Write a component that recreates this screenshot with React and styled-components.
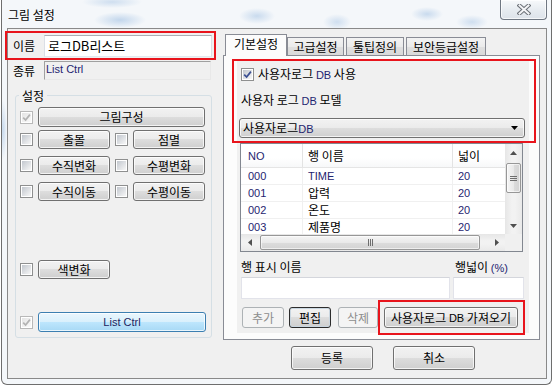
import React from "react";
import styled, { createGlobalStyle, css } from "styled-components";

const KR = `"Noto Sans CJK KR", "Liberation Sans", sans-serif`;
const LATIN = `"Liberation Sans", "DejaVu Sans", sans-serif`;
const RED = "#e8141c";

const GlobalStyle = createGlobalStyle`
  html, body { margin: 0; padding: 0; background: #fff; }
  body { font-family: ${KR}; font-size: 12px; color: #000; }
  *, *::before, *::after { box-sizing: border-box; }
`;

// window frame (Win7 glass)
const Frame = styled.div`
  width: 551px;
  height: 385px;
  margin-left: 1px;
  display: flex;
  flex-direction: column;
  border: 1px solid #6e6e6e;
  border-top: none;
  border-radius: 0 0 6px 6px;
  background:
    radial-gradient(ellipse 26px 8px at 118px 20px, rgba(120, 165, 215, 0.4), rgba(120, 165, 215, 0)),
    radial-gradient(ellipse 30px 6px at 110px 2px, rgba(120, 165, 215, 0.3), rgba(120, 165, 215, 0)),
    radial-gradient(ellipse 18px 8px at 255px 16px, rgba(120, 165, 215, 0.35), rgba(120, 165, 215, 0)),
    radial-gradient(ellipse 14px 8px at 335px 22px, rgba(120, 165, 215, 0.3), rgba(120, 165, 215, 0)),
    radial-gradient(ellipse 16px 7px at 425px 14px, rgba(120, 165, 215, 0.35), rgba(120, 165, 215, 0)),
    radial-gradient(ellipse 16px 7px at 470px 22px, rgba(120, 165, 215, 0.3), rgba(120, 165, 215, 0)),
    radial-gradient(ellipse 4px 30px at 1px 130px, rgba(120, 165, 215, 0.35), rgba(120, 165, 215, 0)),
    #f4f7fa;
`;

const TitleBar = styled.div`
  height: 28px;
  flex: none;
  display: flex;
  align-items: flex-start;
  padding-left: 6px;
`;

const Title = styled.div`
  padding-top: 8px;
  line-height: 14px;
  font-size: 12px;
`;

const CloseBtn = styled.div`
  margin-left: auto;
  margin-right: 4px;
  width: 47px;
  height: 20px;
  border: 1px solid #6f7782;
  border-top: none;
  border-radius: 0 0 4px 4px;
  background: linear-gradient(#f7f9fb, #e6ebf0 55%, #dde3ea);
  box-shadow: inset 0 0 0 1px rgba(255, 255, 255, 0.7);
  display: flex;
  align-items: center;
  justify-content: center;
`;

const Client = styled.div`
  flex: 1;
  margin: 0 4px 5px 5px;
  border: 1px solid #898989;
  background: #f0f0f0;
  display: flex;
  flex-direction: column;
`;

const Main = styled.div`
  height: 311px;
  flex: none;
  display: flex;
`;

const LeftPane = styled.div`
  width: 215px;
  flex: none;
  display: flex;
  flex-direction: column;
`;

const NameRow = styled.div`
  margin: 4px 0 0 -1px;
  width: 207px;
  height: 25px;
  display: flex;
  align-items: center;
  padding-left: 6px;
  outline: 2px solid ${RED};
`;

const TypeRow = styled.div`
  margin-top: 3px;
  height: 19px;
  display: flex;
  align-items: center;
  padding-left: 5px;
`;

const FieldLabel = styled.div`
  width: 31px;
  line-height: 14px;
  flex: none;
`;

const TextBox = styled.div`
  width: ${(p) => p.$w}px;
  height: 22px;
  background: #fff;
  border: 1px solid #dbdfe6;
  border-top-color: #abadb3;
  border-bottom-color: #e3e9ef;
  padding: 0 3px;
  font-size: 13px;
  line-height: 20px;
`;

const ReadOnlyField = styled.div`
  width: 167px;
  height: 19px;
  border: 1px solid #e8e8e8;
  border-top-color: #a0a0a0;
  border-left-color: #a0a0a0;
  padding: 1px 0 0 1px;
  font-family: ${LATIN};
  font-size: 11px;
  line-height: 13px;
  color: #1f2570;
`;

const GroupBox = styled.fieldset`
  margin: 9px 0 0 7px;
  width: 197px;
  min-width: 0;
  padding: 0;
  border: 1px solid #d5dfe5;
  border-radius: 3px;
`;

const Legend = styled.legend`
  margin-left: 3px;
  padding: 0 3px;
  line-height: 13px;
  font-size: 12px;
`;

const GroupBody = styled.div`
  display: flex;
  flex-direction: column;
  padding: 0 0 5px 4px;
`;

const OptRow = styled.div`
  display: flex;
  align-items: center;
  height: ${(p) => p.$h}px;
  margin-top: ${(p) => p.$mt}px;
`;

const OptItem = styled.div`
  display: flex;
  align-items: center;
  gap: 5px;
  margin-left: ${(p) => p.$ml || 0}px;
`;

const CheckBox = styled.span`
  display: inline-flex;
  width: 13px;
  height: 13px;
  flex: none;
  padding: 1px;
  border: 1px solid ${(p) => (p.$disabled ? "#b8b8b8" : "#8e8f8f")};
  background: ${(p) =>
    p.$disabled
      ? "linear-gradient(135deg, #e4e4e4, #fafafa) content-box, #fff"
      : "linear-gradient(135deg, #c2c7ce, #f7f7f7) content-box, #fff"};
  svg {
    display: block;
  }
`;

const Btn = styled.button`
  font-family: ${KR};
  font-size: 12px;
  line-height: 14px;
  color: #000;
  width: ${(p) => p.$w}px;
  height: ${(p) => p.$h || 19}px;
  flex: none;
  margin: 0 0 0 ${(p) => p.$ml || 0}px;
  padding: 0;
  border: 1px solid #707070;
  border-radius: 3px;
  background: linear-gradient(#f2f2f2 0%, #ebebeb 49%, #dddddd 50%, #cfcfcf 100%);
  box-shadow: inset 0 0 0 1px rgba(255, 255, 255, 0.75);
  display: flex;
  align-items: center;
  justify-content: center;
  white-space: nowrap;

  ${(p) =>
    p.$variant === "hot" &&
    css`
      border-color: #3c7fb1;
      background: linear-gradient(#eaf6fd 0%, #d9f0fc 49%, #bee6fd 50%, #a7d9f5 100%);
    `}
  ${(p) =>
    p.$variant === "disabled" &&
    css`
      border-color: #adb2b5;
      background: #f4f4f4;
      box-shadow: none;
      color: #8d8d8d;
    `}
  ${(p) =>
    p.$variant === "default" &&
    css`
      border-color: #2c2c2c;
      box-shadow: inset 0 0 0 1px #c9d6e0;
    `}
`;

const Lat = styled.span`
  font-family: ${LATIN};
  font-size: 11px;
  color: ${(p) => p.$color || "#1f2570"};
`;

// right side: tab control
const RightPane = styled.div`
  flex: 1;
  display: flex;
  flex-direction: column;
  padding-top: 5px;
`;

const TabStrip = styled.div`
  height: 21px;
  flex: none;
  display: flex;
  align-items: flex-end;
  gap: 2px;
  padding-left: 2px;
`;

const Tab = styled.div`
  width: ${(p) => p.$w}px;
  height: 18px;
  border: 1px solid #898c95;
  border-bottom: none;
  background: linear-gradient(#f3f3f3, #ebebeb 50%, #e0e0e0 51%, #d9d9d9);
  display: flex;
  align-items: center;
  justify-content: center;
  line-height: 14px;
  padding-top: 1px;

  ${(p) =>
    p.$active &&
    css`
      position: relative;
      z-index: 1;
      height: 22px;
      margin-bottom: -1px;
      margin-right: -2px;
      background: #fcfcfc;
      padding: 0 0 3px;
    `}
`;

const TabPanel = styled.div`
  width: 317px;
  height: 285px;
  border: 1px solid #898c95;
  background: #fcfcfc;
  padding: 5px 0 0 13px;
`;

const Page = styled.div`
  width: 292px;
  height: 272px;
  background: #f0f0f0;
  display: flex;
  flex-direction: column;
`;

const Highlight = styled.div`
  margin: -2px -7px 0 -5px;
  border: 2px solid ${RED};
  padding: 7px 0 3px 5px;
  display: flex;
  flex-direction: column;
`;

const CheckRow = styled.div`
  margin-left: 2px;
  height: 13px;
  display: flex;
  align-items: center;
  gap: 4px;
  line-height: 14px;
`;

const ModelLabel = styled.div`
  margin: 12px 0 0 2px;
  line-height: 14px;
`;

const Combo = styled.div`
  margin-top: 10px;
  width: 286px;
  height: 20px;
  border: 1px solid #707070;
  border-radius: 3px;
  background: linear-gradient(#f2f2f2 0%, #ebebeb 49%, #dddddd 50%, #cfcfcf 100%);
  box-shadow: inset 0 0 0 1px rgba(255, 255, 255, 0.75);
  display: flex;
  align-items: center;
  padding: 0 6px 0 3px;
  line-height: 14px;

  svg {
    margin-left: auto;
  }
`;

const ListView = styled.div`
  margin: 0 6px 0 3px;
  height: 109px;
  border: 1px solid #828790;
  background: #fff;
  display: grid;
  grid-template-columns: 1fr 17px;
  grid-template-rows: 1fr 17px;
`;

const ListBody = styled.div`
  overflow: hidden;
`;

const ListHead = styled.div`
  height: 24px;
  display: flex;
  border-bottom: 1px solid #e5e5e5;
  background: linear-gradient(#ffffff, #ffffff 60%, #f7f8f9);
`;

const ListRow = styled.div`
  height: 17px;
  display: flex;
  border-bottom: 1px solid #f0f0f0;
`;

const Cell = styled.div`
  width: ${(p) => p.$w}px;
  flex: none;
  padding-left: ${(p) => p.$pl}px;
  border-right: 1px solid ${(p) => (p.$head ? "#e3e3e3" : "#f0f0f0")};
  display: flex;
  align-items: center;
  white-space: nowrap;
  overflow: hidden;
  line-height: 14px;
`;

const VScroll = styled.div`
  display: flex;
  flex-direction: column;
  background: linear-gradient(90deg, #e6e6e6, #f2f2f2 40%, #f2f2f2 60%, #e9e9e9);
`;

const HScroll = styled.div`
  display: flex;
  background: linear-gradient(#e6e6e6, #f2f2f2 40%, #f2f2f2 60%, #e9e9e9);
`;

const Corner = styled.div`
  background: #f0f0f0;
`;

const ArrowBox = styled.div`
  width: 17px;
  height: 17px;
  flex: none;
  display: flex;
  align-items: center;
  justify-content: center;
  margin-left: ${(p) => (p.$end ? "auto" : "0")};
  margin-top: ${(p) => (p.$bottom ? "auto" : "0")};
`;

const Thumb = styled.div`
  flex: none;
  border: 1px solid #979797;
  border-radius: 2px;
  display: flex;
  align-items: center;
  justify-content: center;
  box-shadow: inset 0 0 0 1px rgba(255, 255, 255, 0.6);
  ${(p) =>
    p.$vertical
      ? css`
          width: 15px;
          height: 30px;
          margin: 2px 1px 0;
          background: linear-gradient(90deg, #f5f5f5, #e9e9e9 50%, #dcdcdc 51%, #d3d3d3);
        `
      : css`
          width: 220px;
          height: 15px;
          margin: 1px 0 0 2px;
          background: linear-gradient(#f5f5f5, #e9e9e9 50%, #dcdcdc 51%, #d3d3d3);
        `}
`;

const Grip = styled.div`
  ${(p) =>
    p.$vertical
      ? css`
          width: 7px;
          height: 5px;
          background: repeating-linear-gradient(#6e6e6e 0 1px, transparent 1px 2px);
        `
      : css`
          width: 5px;
          height: 7px;
          background: repeating-linear-gradient(90deg, #6e6e6e 0 1px, transparent 1px 2px);
        `}
`;

const EditGrid = styled.div`
  margin: 8px 0 0 4px;
  display: grid;
  grid-template-columns: 209px 71px;
  column-gap: 3px;
  row-gap: 2px;
`;

const EditLabel = styled.div`
  line-height: 14px;
  padding-left: ${(p) => p.$pl || 0}px;
`;

const EditBox = styled.div`
  height: 22px;
  background: #fff;
  border: 1px solid #e2e3ea;
  border-top-color: #d4d6dc;
`;

const ButtonRow = styled.div`
  margin: 8px 0 0 5px;
  display: flex;
  align-items: flex-start;
`;

const BtnHighlight = styled.div`
  margin: -7px 0;
  border: 2px solid ${RED};
  padding: 5px 5px 5px 4px;
`;

const Footer = styled.div`
  margin-top: 6px;
  padding-left: 283px;
  display: flex;
  gap: 20px;
`;

function Check({ checked, disabled }) {
  return (
    <CheckBox $disabled={disabled}>
      {checked && (
        <svg width="9" height="9" viewBox="0 0 9 9">
          <path
            d="M1.2 4.6 L3.6 7 L7.9 1.6"
            fill="none"
            stroke={disabled ? "#b3b3b3" : "#3b4f93"}
            strokeWidth="1.7"
          />
        </svg>
      )}
    </CheckBox>
  );
}

function Tri({ dir }) {
  const pts = {
    up: "0,4 3.5,0 7,4",
    down: "0,0 7,0 3.5,4",
    left: "4,0 4,7 0,3.5",
    right: "0,0 0,7 4,3.5",
  }[dir];
  const vertical = dir === "up" || dir === "down";
  return (
    <svg width={vertical ? 7 : 4} height={vertical ? 4 : 7} viewBox={vertical ? "0 0 7 4" : "0 0 4 7"}>
      <polygon points={pts} fill="#505050" />
    </svg>
  );
}

const cols = [
  { w: 62, pl: 7 },
  { w: 150, pl: 5 },
  { w: 60, pl: 5 },
];

const rows = [
  { no: "000", name: "TIME", latin: true, width: "20" },
  { no: "001", name: "압력", width: "20" },
  { no: "002", name: "온도", width: "20" },
  { no: "003", name: "제품명", width: "20" },
];

const pairs = [
  ["출몰", "점멸"],
  ["수직변화", "수평변화"],
  ["수직이동", "수평이동"],
];

export default function App() {
  return (
    <>
      <GlobalStyle />
      <Frame>
        <TitleBar>
          <Title>그림 설정</Title>
          <CloseBtn>
            <svg width="14" height="11" viewBox="0 0 14 11">
              <path d="M2.5 1.5 L11.5 9.5 M11.5 1.5 L2.5 9.5" stroke="#6a6f76" strokeWidth="4" strokeLinecap="square" />
              <path d="M2.5 1.5 L11.5 9.5 M11.5 1.5 L2.5 9.5" stroke="#f4f5f7" strokeWidth="2" strokeLinecap="square" />
            </svg>
          </CloseBtn>
        </TitleBar>

        <Client>
          <Main>
            <LeftPane>
              <NameRow>
                <FieldLabel>이름</FieldLabel>
                <TextBox $w={168}>로그DB리스트</TextBox>
              </NameRow>
              <TypeRow>
                <FieldLabel>종류</FieldLabel>
                <ReadOnlyField>List Ctrl</ReadOnlyField>
              </TypeRow>

              <GroupBox>
                <Legend>설정</Legend>
                <GroupBody>
                  <OptRow $mt={5} $h={20}>
                    <OptItem>
                      <Check checked disabled />
                      <Btn $w={167} $h={20}>그림구성</Btn>
                    </OptItem>
                  </OptRow>
                  {pairs.map(([a, b], i) => (
                    <OptRow key={a} $mt={i === 0 ? 3 : 7} $h={19}>
                      <OptItem>
                        <Check />
                        <Btn $w={72}>{a}</Btn>
                      </OptItem>
                      <OptItem $ml={5}>
                        <Check />
                        <Btn $w={72}>{b}</Btn>
                      </OptItem>
                    </OptRow>
                  ))}
                  <OptRow $mt={59} $h={19}>
                    <OptItem>
                      <Check />
                      <Btn $w={72}>색변화</Btn>
                    </OptItem>
                  </OptRow>
                  <OptRow $mt={33} $h={20}>
                    <OptItem>
                      <Check checked disabled />
                      <Btn $w={168} $h={20} $variant="hot">
                        <Lat $color="#1c2460">List Ctrl</Lat>
                      </Btn>
                    </OptItem>
                  </OptRow>
                </GroupBody>
              </GroupBox>
            </LeftPane>

            <RightPane>
              <TabStrip>
                <Tab $active $w={62}>기본설정</Tab>
                <Tab $w={57}>고급설정</Tab>
                <Tab $w={58}>툴팁정의</Tab>
                <Tab $w={80}>보안등급설정</Tab>
              </TabStrip>
              <TabPanel>
                <Page>
                  <Highlight>
                    <CheckRow>
                      <Check checked />
                      <span>
                        사용자로그 <Lat>DB</Lat> 사용
                      </span>
                    </CheckRow>
                    <ModelLabel>
                      사용자 로그 <Lat>DB</Lat> 모델
                    </ModelLabel>
                    <Combo>
                      <span>
                        사용자로그<Lat>DB</Lat>
                      </span>
                      <svg width="7" height="4" viewBox="0 0 7 4">
                        <polygon points="0,0 7,0 3.5,4" fill="#000" />
                      </svg>
                    </Combo>
                  </Highlight>

                  <ListView>
                    <ListBody>
                      <ListHead>
                        <Cell $head $w={cols[0].w} $pl={cols[0].pl}>
                          <Lat>NO</Lat>
                        </Cell>
                        <Cell $head $w={cols[1].w} $pl={cols[1].pl}>행 이름</Cell>
                        <Cell $head $w={cols[2].w} $pl={cols[2].pl}>넓이</Cell>
                      </ListHead>
                      {rows.map((r) => (
                        <ListRow key={r.no}>
                          <Cell $w={cols[0].w} $pl={cols[0].pl}>
                            <Lat>{r.no}</Lat>
                          </Cell>
                          <Cell $w={cols[1].w} $pl={cols[1].pl}>
                            {r.latin ? <Lat>{r.name}</Lat> : r.name}
                          </Cell>
                          <Cell $w={cols[2].w} $pl={cols[2].pl}>
                            <Lat>{r.width}</Lat>
                          </Cell>
                        </ListRow>
                      ))}
                    </ListBody>
                    <VScroll>
                      <ArrowBox>
                        <Tri dir="up" />
                      </ArrowBox>
                      <Thumb $vertical>
                        <Grip $vertical />
                      </Thumb>
                      <ArrowBox $bottom>
                        <Tri dir="down" />
                      </ArrowBox>
                    </VScroll>
                    <HScroll>
                      <ArrowBox>
                        <Tri dir="left" />
                      </ArrowBox>
                      <Thumb>
                        <Grip />
                      </Thumb>
                      <ArrowBox $end>
                        <Tri dir="right" />
                      </ArrowBox>
                    </HScroll>
                    <Corner />
                  </ListView>

                  <EditGrid>
                    <EditLabel>행 표시 이름</EditLabel>
                    <EditLabel $pl={2}>
                      행넓이 <Lat>(%)</Lat>
                    </EditLabel>
                    <EditBox />
                    <EditBox />
                  </EditGrid>

                  <ButtonRow>
                    <Btn $w={42} $h={21} $variant="disabled">추가</Btn>
                    <Btn $w={42} $h={21} $ml={5} $variant="default">편집</Btn>
                    <Btn $w={40} $h={21} $ml={7} $variant="disabled">삭제</Btn>
                    <BtnHighlight>
                      <Btn $w={134} $h={21}>
                        사용자로그&nbsp;<Lat $color="#000">DB</Lat>&nbsp;가져오기
                      </Btn>
                    </BtnHighlight>
                  </ButtonRow>
                </Page>
              </TabPanel>
            </RightPane>
          </Main>

          <Footer>
            <Btn $w={82} $h={24}>등록</Btn>
            <Btn $w={82} $h={24}>취소</Btn>
          </Footer>
        </Client>
      </Frame>
    </>
  );
}
